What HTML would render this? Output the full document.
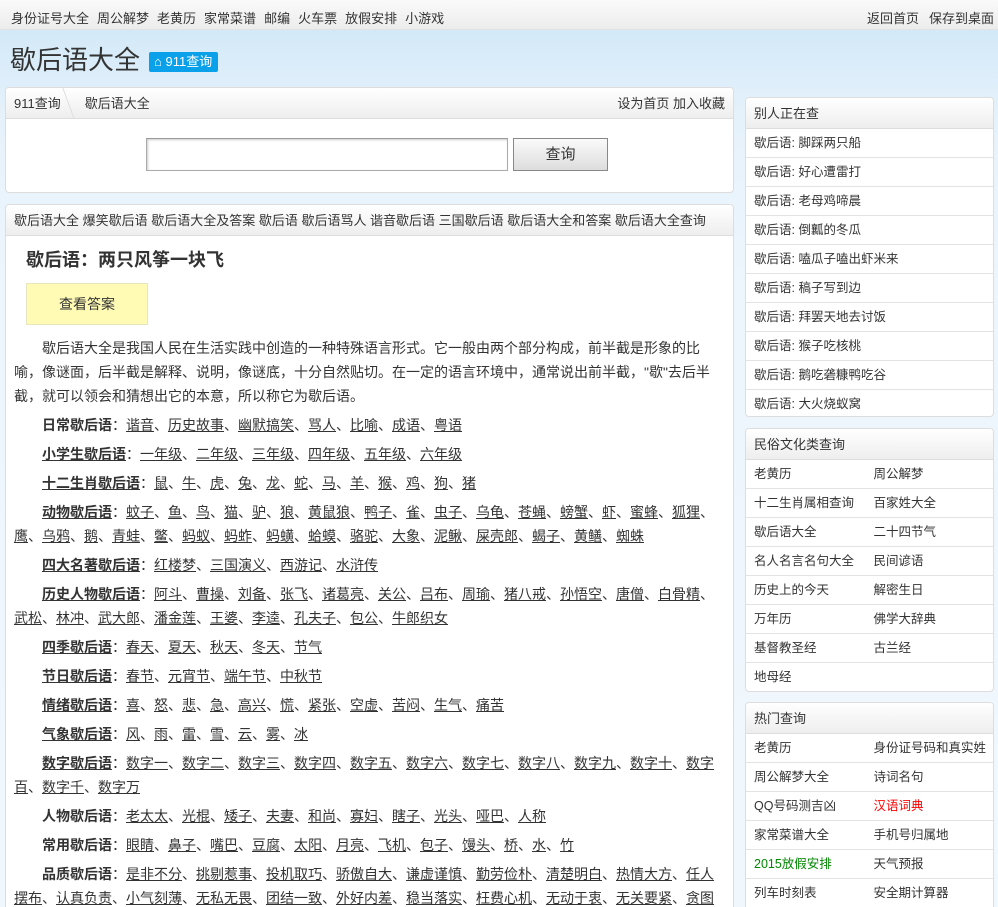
<!DOCTYPE html>
<html style="height:907px;overflow:hidden"><head><meta charset="utf-8"><style>
*{margin:0;padding:0;box-sizing:border-box}
body{width:998px;height:907px;overflow:hidden;position:relative;font-family:"Liberation Sans","Noto Sans CJK SC",sans-serif;font-size:13px;color:#333;background:linear-gradient(180deg,#d3e9f8 30px,#e6f2fb 120px,#eef6fd 300px,#f0f7fd 100%)}
a{color:#333}
.top{height:30px;background:linear-gradient(#fafafa,#ececec);border-bottom:1px solid #e2e2e2;position:relative}
.top .l{position:absolute;left:11px;top:8px}
.top .l span{margin-right:8px}
.top .r{position:absolute;right:4px;top:8px}
.top .r span{margin-left:10px}
.logo{position:absolute;left:10px;top:44px;font-size:26px;line-height:32px;color:#333}
.badge{position:absolute;left:149px;top:52px;height:20px;width:69px;background:#0aa0ea;color:#fff;font-size:13px;line-height:20px;padding-left:5px;border-radius:2px}
.box{position:absolute;background:#fff;border:1px solid #ddd;border-radius:4px;overflow:hidden}
.hd{height:31px;background:linear-gradient(#fff,#eee);border-bottom:1px solid #ddd;line-height:31px;padding-left:8px;font-size:13px}
.side .row{height:29px;line-height:28px;border-bottom:1px solid #e3e3e3;padding-left:8px;font-size:12.5px}
.side .row:last-child{border-bottom:none}
.two .row{display:flex}
.two .row span{width:124px}
.main p{font-size:14px;line-height:24px;margin-bottom:5px;text-indent:2em}
.main p b{text-decoration:underline}
.main p a{text-decoration:underline}
</style></head><body>
<div class="top"><div class="l"><span>身份证号大全</span><span>周公解梦</span><span>老黄历</span><span>家常菜谱</span><span>邮编</span><span>火车票</span><span>放假安排</span>小游戏</div><div class="r"><span>返回首页</span><span>保存到桌面</span></div></div>
<div class="logo">歇后语大全</div>
<div class="badge">&#8962; 911查询</div>

<div class="box" style="left:5px;top:87px;width:729px;height:106px">
<div class="hd" style="position:relative"><a>911查询</a><span style="position:absolute;left:62px;top:0;width:1px;height:31px;border-right:1px solid #ddd;transform:skewX(20deg)"></span><span style="margin-left:24px">歇后语大全</span><span style="position:absolute;right:8px"><a>设为首页</a> <a>加入收藏</a></span></div>
<div style="position:absolute;left:140px;top:50px;width:362px;height:33px;border:1px solid #aaa;border-top-color:#999;box-shadow:inset 1px 1px 2px #ccc"></div>
<div style="position:absolute;left:507px;top:50px;width:95px;height:33px;border:1px solid #888;background:linear-gradient(#fafafa,#ddd);text-align:center;line-height:31px;font-size:15px">查询</div>
</div>

<div class="box main" style="left:5px;top:204px;width:729px;height:720px">
<div class="hd">歇后语大全 爆笑歇后语 歇后语大全及答案 歇后语 歇后语骂人 谐音歇后语 三国歇后语 歇后语大全和答案 歇后语大全查询</div>
<div style="padding:12px 8px 0 8px">
<div style="font-size:18px;font-weight:bold;margin-left:12px;line-height:24px">歇后语：两只风筝一块飞</div>
<div style="margin:11px 0 0 12px;width:122px;height:42px;background:#fffbb5;border:1px solid #e5e5c0;text-align:center;line-height:40px;font-size:14px">查看答案</div>
<div style="margin-top:11px">
<p>歇后语大全是我国人民在生活实践中创造的一种特殊语言形式。它一般由两个部分构成，前半截是形象的比喻，像谜面，后半截是解释、说明，像谜底，十分自然贴切。在一定的语言环境中，通常说出前半截，"歇"去后半截，就可以领会和猜想出它的本意，所以称它为歇后语。</p>
<p><strong>日常歇后语</strong>：<a>谐音</a>、<a>历史故事</a>、<a>幽默搞笑</a>、<a>骂人</a>、<a>比喻</a>、<a>成语</a>、<a>粤语</a></p>
<p><b>小学生歇后语</b>：<a>一年级</a>、<a>二年级</a>、<a>三年级</a>、<a>四年级</a>、<a>五年级</a>、<a>六年级</a></p>
<p><b>十二生肖歇后语</b>：<a>鼠</a>、<a>牛</a>、<a>虎</a>、<a>兔</a>、<a>龙</a>、<a>蛇</a>、<a>马</a>、<a>羊</a>、<a>猴</a>、<a>鸡</a>、<a>狗</a>、<a>猪</a></p>
<p><b>动物歇后语</b>：<a>蚊子</a>、<a>鱼</a>、<a>鸟</a>、<a>猫</a>、<a>驴</a>、<a>狼</a>、<a>黄鼠狼</a>、<a>鸭子</a>、<a>雀</a>、<a>虫子</a>、<a>乌龟</a>、<a>苍蝇</a>、<a>螃蟹</a>、<a>虾</a>、<a>蜜蜂</a>、<a>狐狸</a>、<a>鹰</a>、<a>乌鸦</a>、<a>鹅</a>、<a>青蛙</a>、<a>鳖</a>、<a>蚂蚁</a>、<a>蚂蚱</a>、<a>蚂蟥</a>、<a>蛤蟆</a>、<a>骆驼</a>、<a>大象</a>、<a>泥鳅</a>、<a>屎壳郎</a>、<a>蝎子</a>、<a>黄鳝</a>、<a>蜘蛛</a></p>
<p><b>四大名著歇后语</b>：<a>红楼梦</a>、<a>三国演义</a>、<a>西游记</a>、<a>水浒传</a></p>
<p><b>历史人物歇后语</b>：<a>阿斗</a>、<a>曹操</a>、<a>刘备</a>、<a>张飞</a>、<a>诸葛亮</a>、<a>关公</a>、<a>吕布</a>、<a>周瑜</a>、<a>猪八戒</a>、<a>孙悟空</a>、<a>唐僧</a>、<a>白骨精</a>、<a>武松</a>、<a>林冲</a>、<a>武大郎</a>、<a>潘金莲</a>、<a>王婆</a>、<a>李逵</a>、<a>孔夫子</a>、<a>包公</a>、<a>牛郎织女</a></p>
<p><b>四季歇后语</b>：<a>春天</a>、<a>夏天</a>、<a>秋天</a>、<a>冬天</a>、<a>节气</a></p>
<p><b>节日歇后语</b>：<a>春节</a>、<a>元宵节</a>、<a>端午节</a>、<a>中秋节</a></p>
<p><b>情绪歇后语</b>：<a>喜</a>、<a>怒</a>、<a>悲</a>、<a>急</a>、<a>高兴</a>、<a>慌</a>、<a>紧张</a>、<a>空虚</a>、<a>苦闷</a>、<a>生气</a>、<a>痛苦</a></p>
<p><b>气象歇后语</b>：<a>风</a>、<a>雨</a>、<a>雷</a>、<a>雪</a>、<a>云</a>、<a>雾</a>、<a>冰</a></p>
<p><b>数字歇后语</b>：<a>数字一</a>、<a>数字二</a>、<a>数字三</a>、<a>数字四</a>、<a>数字五</a>、<a>数字六</a>、<a>数字七</a>、<a>数字八</a>、<a>数字九</a>、<a>数字十</a>、<a>数字百</a>、<a>数字千</a>、<a>数字万</a></p>
<p><strong>人物歇后语</strong>：<a>老太太</a>、<a>光棍</a>、<a>矮子</a>、<a>夫妻</a>、<a>和尚</a>、<a>寡妇</a>、<a>瞎子</a>、<a>光头</a>、<a>哑巴</a>、<a>人称</a></p>
<p><strong>常用歇后语</strong>：<a>眼睛</a>、<a>鼻子</a>、<a>嘴巴</a>、<a>豆腐</a>、<a>太阳</a>、<a>月亮</a>、<a>飞机</a>、<a>包子</a>、<a>馒头</a>、<a>桥</a>、<a>水</a>、<a>竹</a></p>
<p><strong>品质歇后语</strong>：<a>是非不分</a>、<a>挑剔惹事</a>、<a>投机取巧</a>、<a>骄傲自大</a>、<a>谦虚谨慎</a>、<a>勤劳俭朴</a>、<a>清楚明白</a>、<a>热情大方</a>、<a>任人摆布</a>、<a>认真负责</a>、<a>小气刻薄</a>、<a>无私无畏</a>、<a>团结一致</a>、<a>外好内差</a>、<a>稳当落实</a>、<a>枉费心机</a>、<a>无动于衷</a>、<a>无关要紧</a>、<a>贪图</a></p>
</div></div></div>

<div class="box side" style="left:745px;top:97px;width:249px;height:320px">
<div class="hd">别人正在查</div>
<div class="row">歇后语: 脚踩两只船</div><div class="row">歇后语: 好心遭雷打</div><div class="row">歇后语: 老母鸡啼晨</div><div class="row">歇后语: 倒瓤的冬瓜</div><div class="row">歇后语: 嗑瓜子嗑出虾米来</div><div class="row">歇后语: 稿子写到边</div><div class="row">歇后语: 拜罢天地去讨饭</div><div class="row">歇后语: 猴子吃核桃</div><div class="row">歇后语: 鹅吃砻糠鸭吃谷</div><div class="row">歇后语: 大火烧蚁窝</div>
</div>

<div class="box side two" style="left:745px;top:428px;width:249px;height:264px">
<div class="hd">民俗文化类查询</div>
<div class="row"><span>老黄历</span><span>周公解梦</span></div>
<div class="row"><span>十二生肖属相查询</span><span>百家姓大全</span></div>
<div class="row"><span>歇后语大全</span><span>二十四节气</span></div>
<div class="row"><span>名人名言名句大全</span><span>民间谚语</span></div>
<div class="row"><span>历史上的今天</span><span>解密生日</span></div>
<div class="row"><span>万年历</span><span>佛学大辞典</span></div>
<div class="row"><span>基督教圣经</span><span>古兰经</span></div>
<div class="row"><span>地母经</span><span></span></div>
</div>

<div class="box side two" style="left:745px;top:702px;width:249px;height:230px">
<div class="hd">热门查询</div>
<div class="row"><span>老黄历</span><span style="white-space:nowrap">身份证号码和真实姓</span></div>
<div class="row"><span>周公解梦大全</span><span>诗词名句</span></div>
<div class="row"><span>QQ号码测吉凶</span><span style="color:#f00">汉语词典</span></div>
<div class="row"><span>家常菜谱大全</span><span>手机号归属地</span></div>
<div class="row"><span style="color:#080">2015放假安排</span><span>天气预报</span></div>
<div class="row"><span>列车时刻表</span><span>安全期计算器</span></div>
</div>
</body></html>
